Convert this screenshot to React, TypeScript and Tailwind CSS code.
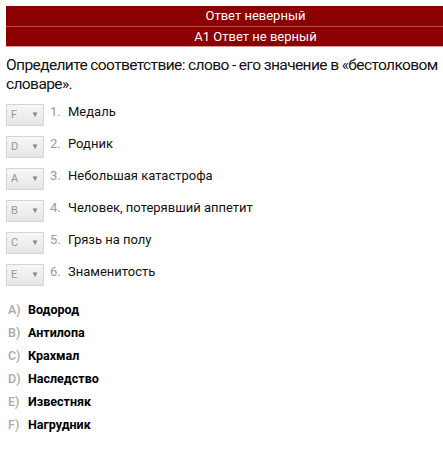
const rows = [
  { sel: 'F', text: 'Медаль' },
  { sel: 'D', text: 'Родник' },
  { sel: 'A', text: 'Небольшая катастрофа' },
  { sel: 'B', text: 'Человек, потерявший аппетит' },
  { sel: 'C', text: 'Грязь на полу' },
  { sel: 'E', text: 'Знаменитость' },
]

const answers = [
  ['A', 'Водород'],
  ['B', 'Антилопа'],
  ['C', 'Крахмал'],
  ['D', 'Наследство'],
  ['E', 'Известняк'],
  ['F', 'Нагрудник'],
]

export default function App() {
  return (
    <div className="w-[443px] h-[467px] bg-white pt-[6px] font-['Roboto',sans-serif] text-[#111]">
      {/* result header */}
      <div className="ml-[6px] bg-[#8b0000] text-white text-[13px]">
        <div className="h-[21px] flex items-center justify-center pl-[62px] border-b border-[#b94a4a]">
          Ответ неверный
        </div>
        <div className="h-[20px] flex items-center justify-center pl-[62px] border-b border-[#d89a9a]">
          A1 Ответ не верный
        </div>
      </div>

      <p className="px-[6px] mt-[9px] text-[15.5px] tracking-[-0.6px] leading-[19px] whitespace-nowrap">
        Определите соответствие: слово - его значение в «бестолковом
        <br />
        словаре».
      </p>

      <div className="mt-[10px] flex flex-col gap-[10px] pl-[6px]">
        {rows.map((r, i) => (
          <div key={i} className="flex items-center h-[22px]">
            <div className="w-[38px] h-[22px] border border-[#d4d4d4] bg-gradient-to-b from-[#f7f7f7] to-[#e6e6e6] flex items-center justify-between px-[4px] text-[11px] text-[#999]">
              <span>{r.sel}</span>
              <span className="text-[8px] text-[#888]">▼</span>
            </div>
            <span className="ml-[6px] w-[18px] text-[13px] text-[#999] -mt-[6px]">{i + 1}.</span>
            <span className="text-[13px] -mt-[6px]">{r.text}</span>
          </div>
        ))}
      </div>

      <div className="mt-[16px] pl-[8px] flex flex-col gap-[7px]">
        {answers.map(([l, t]) => (
          <div key={l} className="flex items-center h-[16px] text-[12.5px]">
            <span className="w-[20px] text-[#aaa] font-medium">{l})</span>
            <span className="font-bold text-black">{t}</span>
          </div>
        ))}
      </div>
    </div>
  )
}
